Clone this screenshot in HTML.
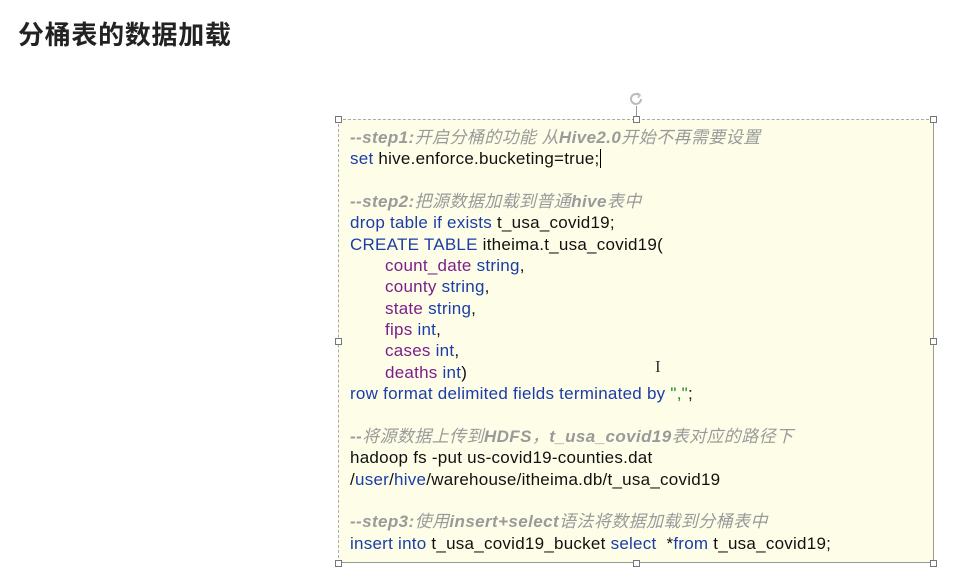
<!DOCTYPE html>
<html><head><meta charset="utf-8"><style>
body{margin:0;width:953px;height:579px;background:#fff;position:relative;overflow:hidden;font-family:"Liberation Sans","Noto Sans CJK SC",sans-serif}
h1{position:absolute;left:18px;top:15px;margin:0;font-size:26px;font-weight:bold;color:#222;font-family:"Liberation Sans","Noto Sans CJK SC",sans-serif;letter-spacing:0.7px}
.box{position:absolute;left:338px;top:119px;width:596px;height:444px;background:#fefee8;border:1px solid #999;border-left:1px dashed #aaa;border-top:1px dashed #aaa;box-sizing:border-box}
.h{position:absolute;width:7px;height:7px;background:#fff;border:1px solid #777;box-sizing:border-box}
pre{position:absolute;left:350px;top:127px;margin:0;font-family:"Liberation Sans","Noto Sans CJK SC",sans-serif;font-size:17px;line-height:21.35px;color:#111;white-space:pre;letter-spacing:0.25px}
.c{color:#9a9a9a;font-style:italic;letter-spacing:0.4px}
.c b{font-weight:bold}
.k{color:#1a3da8}
.p{color:#7a1f8a}
.g{color:#1a8a2a}
.i{padding-left:35px}
</style></head><body>
<h1>分桶表的数据加载</h1>
<div class="box"></div>
<div class="h" style="left:335px;top:116px"></div>
<div class="h" style="left:633px;top:116px"></div>
<div class="h" style="left:930px;top:116px"></div>
<div class="h" style="left:335px;top:338px"></div>
<div class="h" style="left:930px;top:338px"></div>
<div class="h" style="left:335px;top:560px"></div>
<div class="h" style="left:633px;top:560px"></div>
<div class="h" style="left:930px;top:560px"></div>
<div style="position:absolute;left:636px;top:106px;width:1px;height:10px;background:#999"></div>
<svg style="position:absolute;left:627px;top:90px" width="18" height="18" viewBox="0 0 18 18"><path d="M14 9a5 5 0 1 1-2-4" fill="none" stroke="#bbb" stroke-width="2"/><path d="M10 3l3 2-2 3" fill="none" stroke="#bbb" stroke-width="1.5"/></svg>
<pre><span class="c"><b>--step1:</b>开启分桶的功能 从<b>Hive2.0</b>开始不再需要设置</span>
<span class="k">set</span> hive.enforce.bucketing=true;<span style="border-left:1px solid #000;margin-left:1px"></span>

<span class="c"><b>--step2:</b>把源数据加载到普通<b>hive</b>表中</span>
<span class="k">drop table if exists</span> t_usa_covid19;
<span class="k">CREATE TABLE</span> itheima.t_usa_covid19(
<span class="i"><span class="p">count_date</span> <span class="k">string</span>,</span>
<span class="i"><span class="p">county</span> <span class="k">string</span>,</span>
<span class="i"><span class="p">state</span> <span class="k">string</span>,</span>
<span class="i"><span class="p">fips</span> <span class="k">int</span>,</span>
<span class="i"><span class="p">cases</span> <span class="k">int</span>,</span>
<span class="i"><span class="p">deaths</span> <span class="k">int</span>)</span>
<span class="k">row format delimited fields terminated by</span> <span class="g">","</span>;

<span class="c"><b>--</b>将源数据上传到<b>HDFS</b>，<b>t_usa_covid19</b>表对应的路径下</span>
hadoop fs -put us-covid19-counties.dat
/<span class="k">user</span>/<span class="k">hive</span>/warehouse/itheima.db/t_usa_covid19

<span class="c"><b>--step3:</b>使用<b>insert+select</b>语法将数据加载到分桶表中</span>
<span class="k">insert into</span> t_usa_covid19_bucket <span class="k">select</span>  *<span class="k">from</span> t_usa_covid19;</pre>
<div style="position:absolute;left:655px;top:357px;font-size:17px;color:#333;font-family:'Liberation Serif',serif">I</div>
</body></html>
